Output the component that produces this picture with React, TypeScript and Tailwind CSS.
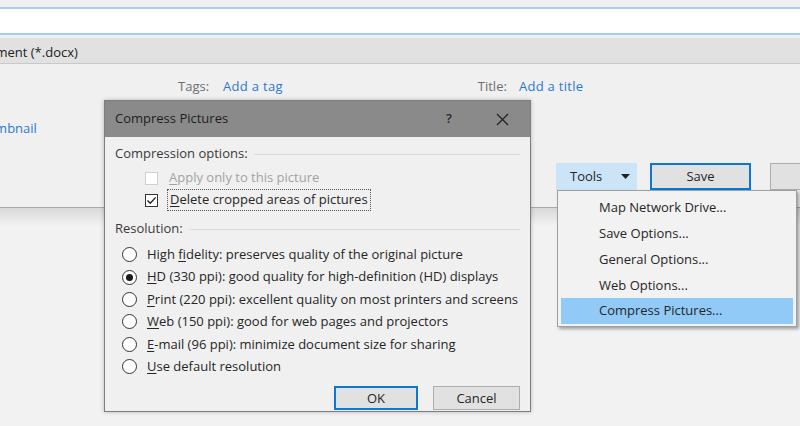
import React from 'react'

const font = { fontFamily: '"Open Sans", "Noto Sans", sans-serif' }

function U({ c }: { c: string }) {
  return <span className="underline underline-offset-2">{c}</span>
}

function Radio({ checked }: { checked?: boolean }) {
  return (
    <span className="w-[15px] h-[15px] rounded-full border border-[#333] bg-white flex items-center justify-center shrink-0">
      {checked && <span className="w-[7px] h-[7px] rounded-full bg-[#1a1a1a]" />}
    </span>
  )
}

function Check({ checked, disabled }: { checked?: boolean; disabled?: boolean }) {
  return (
    <span
      className={
        'w-[13px] h-[13px] border bg-white flex items-center justify-center shrink-0 ' +
        (disabled ? 'border-[#cfcfcf]' : 'border-[#333]')
      }
    >
      {checked && (
        <svg width="11" height="11" viewBox="0 0 11 11">
          <path d="M1.5 5.5 L4.3 8.3 L9.6 2.4" fill="none" stroke="#222" strokeWidth="1.4" />
        </svg>
      )}
    </span>
  )
}

const radios: { label: React.ReactNode; checked?: boolean }[] = [
  { label: <>High <U c="f" />idelity: preserves quality of the original picture</> },
  { label: <><U c="H" />D (330 ppi): good quality for high-definition (HD) displays</>, checked: true },
  { label: <><U c="P" />rint (220 ppi): excellent quality on most printers and screens</> },
  { label: <><U c="W" />eb (150 ppi): good for web pages and projectors</> },
  { label: <><U c="E" />-mail (96 ppi): minimize document size for sharing</> },
  { label: <><U c="U" />se default resolution</> },
]

const menuItems = ['Map Network Drive...', 'Save Options...', 'General Options...', 'Web Options...', 'Compress Pictures...']

export default function App() {
  return (
    <div className="w-[800px] h-[426px] overflow-hidden bg-[#f2f2f2] relative text-[13px] text-[#262626]" style={font}>
      {/* file name input */}
      <div className="h-[7px] bg-[#f0f0f0]" />
      <div className="h-[28px] bg-white border-y-2 border-[#a6cdee]" />
      <div className="h-[3px] bg-[#f0f0f0]" />
      {/* save as type */}
      <div className="h-[26px] bg-[#e1e1e1] border-b border-[#c9c9c9] flex items-center pt-[4px]">
        <span className="-ml-[36px] text-[#222] whitespace-nowrap">Document (*.docx)</span>
      </div>
      {/* details panel */}
      <div className="h-[144px] bg-[#f0f0f0] border-b border-[#a8a8a8] relative">
        <div className="flex items-center h-[44px] pt-[2px] whitespace-nowrap">
          <span className="ml-[178px] text-[#6e6e6e]">Tags:</span>
          <span className="ml-[14px] text-[#2b79d3] tracking-[0.3px]">Add a tag</span>
          <span className="ml-[195px] text-[#6e6e6e]">Title:</span>
          <span className="ml-[12px] text-[#2b79d3] tracking-[0.3px]">Add a title</span>
        </div>
        <div className="h-[40px] flex items-center pt-[2px]">
          <span className="-ml-[28px] text-[#2b79d3] whitespace-nowrap">Thumbnail</span>
        </div>
        <div className="flex mt-[15px]">
          <div className="ml-[556px] w-[81px] h-[27px] bg-[#cce4f7] border border-[#cce4f7] flex items-center shrink-0">
            <span className="ml-[13px]">Tools</span>
            <svg className="ml-[19px]" width="9" height="5" viewBox="0 0 9 5">
              <path d="M0 0 H9 L4.5 5 Z" fill="#222" />
            </svg>
          </div>
          <div className="ml-[13px] w-[101px] h-[27px] bg-[#e1e1e1] border-2 border-[#0a78d4] flex items-center justify-center shrink-0">
            Save
          </div>
          <div className="ml-[19px] w-[60px] h-[27px] bg-[#e1e1e1] border border-[#adadad] shrink-0" />
        </div>
      </div>
      <div className="h-[18px] bg-gradient-to-b from-[#d9d9d9] to-[#f2f2f2]" />

      {/* Compress Pictures dialog */}
      <div className="absolute left-[104px] top-[100px] w-[427px] h-[312px] bg-[#f0f0f0] border border-[#7d7d7d] shadow-[0_0_4px_rgba(0,0,0,0.25)] flex flex-col">
        <div className="h-[36px] bg-[#8a8a8a] flex items-center shrink-0">
          <span className="ml-[10px] text-[#1e1e1e]">Compress Pictures</span>
          <span className="ml-auto mr-[44px] text-[#2a2a2a] font-semibold">?</span>
          <svg className="mr-[21px]" width="13" height="13" viewBox="0 0 13 13">
            <path d="M1 1 L12 12 M12 1 L1 12" stroke="#222" strokeWidth="1.3" />
          </svg>
        </div>
        <div className="px-[10px] pt-[8px]">
          <div className="flex items-center gap-[6px] h-[18px]">
            <span className="text-[#3a3a3a]">Compression options:</span>
            <span className="flex-1 h-px bg-[#dcdcdc]" />
          </div>
          <div className="ml-[30px] mt-[5px] flex flex-col gap-[2px]">
            <div className="flex items-center h-[20px]">
              <Check disabled />
              <span className="ml-[11px] text-[#a3a3a3]"><U c="A" />pply only to this picture</span>
            </div>
            <div className="flex items-center h-[20px]">
              <Check checked />
              <span className="ml-[9px] px-[2px] border border-dotted border-[#555]"><U c="D" />elete cropped areas of pictures</span>
            </div>
          </div>
          <div className="flex items-center gap-[6px] h-[18px] mt-[10px]">
            <span className="text-[#3a3a3a]">Resolution:</span>
            <span className="flex-1 h-px bg-[#dcdcdc]" />
          </div>
          <div className="ml-[7px] mt-[7px] flex flex-col gap-[3px]">
            {radios.map((r, i) => (
              <div key={i} className="flex items-center h-[19.4px] gap-[10px]">
                <Radio checked={r.checked} />
                <span>{r.label}</span>
              </div>
            ))}
          </div>
          <div className="flex justify-end gap-[15px] mt-[10px]">
            <div className="w-[84px] h-[24px] bg-[#e1e1e1] border-2 border-[#0a78d4] flex items-center justify-center">OK</div>
            <div className="w-[87px] h-[24px] bg-[#e1e1e1] border border-[#adadad] flex items-center justify-center">Cancel</div>
          </div>
        </div>
      </div>

      {/* Tools menu */}
      <div className="absolute left-[557px] top-[190px] w-[240px] h-[137px] bg-[#f2f2f2] border border-[#a0a0a0] shadow-[2px_2px_3px_rgba(0,0,0,0.35)] pt-[4px] pb-[2px] px-[3px] flex flex-col">
        {menuItems.map((m, i) => (
          <div
            key={m}
            className={
              'h-[26px] flex items-center pl-[38px] ' + (i === menuItems.length - 1 ? 'bg-[#91c9f7]' : '')
            }
          >
            {m}
          </div>
        ))}
      </div>
    </div>
  )
}
